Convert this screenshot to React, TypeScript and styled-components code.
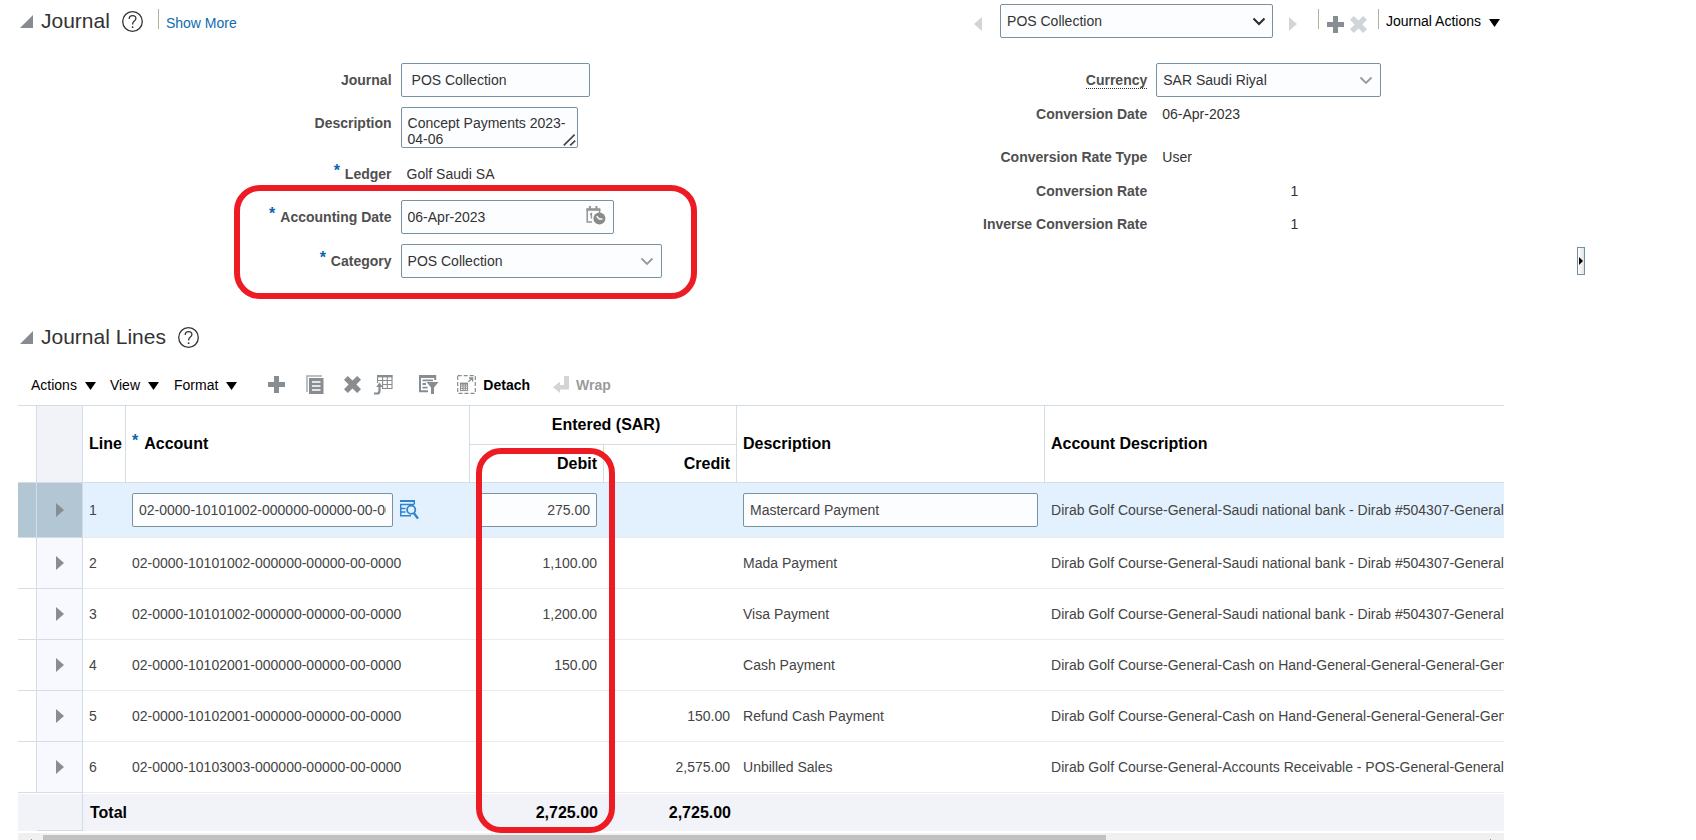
import React from "react";
import styled, { createGlobalStyle, css } from "styled-components";

const color = {
  text: "#333333",
  label: "#4f4f4f",
  link: "#0f6cad",
  required: "#0a66b0",
  fieldBorder: "#7c91a0",
  line: "#d3dde6",
  rowLine: "#ebebeb",
  icon: "#878d91",
  iconOff: "#d2d5d7",
  mark: "#ed1c24",
};

const GlobalStyle = createGlobalStyle`
  *, *::before, *::after { box-sizing: border-box; }
  body {
    margin: 0;
    background: #ffffff;
    color: ${color.text};
    font: 14px/16px "Liberation Sans", Arial, sans-serif;
  }
  button, input, select, textarea { font: inherit; color: inherit; }
`;

const Page = styled.div`
  display: flex;
  height: 100vh;
  overflow: hidden;
`;

const Main = styled.main`
  flex: 1;
  min-width: 0;
  padding-left: 18px;
`;

const SidePanel = styled.aside`
  flex: none;
  width: 192px;
  padding: 247px 0 0 73px;
`;

const SplitterHandle = styled.button`
  display: flex;
  align-items: center;
  justify-content: center;
  width: 8px;
  height: 28px;
  padding: 0;
  border: 1px solid #7290a8;
  background: linear-gradient(90deg, #ffffff, #e4e4e4);
`;

const SectionHeader = styled.header`
  display: flex;
  align-items: center;
  height: 42px;
`;

const Disclosure = styled.button`
  display: flex;
  width: 23px;
  padding: 0 0 0 2px;
  border: 0;
  background: none;
`;

const Title = styled.h2`
  margin: 0;
  font-size: 21px;
  font-weight: 400;
  line-height: 24px;
`;

const HelpButton = styled.button`
  display: flex;
  margin-left: 12px;
  padding: 0;
  border: 0;
  background: none;
`;

const Divider = styled.span`
  width: 1px;
  height: 20px;
  margin-bottom: 5px;
  background: #b3b39a;
`;

const TitleTools = styled.div`
  display: flex;
  align-items: center;
  gap: 7px;
  margin-left: 15px;
`;

const TextLink = styled.a`
  padding-top: 4px;
  color: ${color.link};
  text-decoration: none;
`;

const Navigator = styled.div`
  display: flex;
  align-items: center;
  margin-left: auto;
  padding-right: 4px;
`;

const IconButton = styled.button<{ $space?: number }>`
  display: flex;
  flex: none;
  margin: 0 0 0 ${(p) => p.$space ?? 0}px;
  padding: 0;
  border: 0;
  background: none;
`;

const NavButton = styled(IconButton)`
  padding-top: 6px;
`;

const NavDivider = styled(Divider)<{ $space: number }>`
  margin-left: ${(p) => p.$space}px;
`;

const IconGap = styled.span`
  width: 18px;
`;

const MenuButton = styled.button<{ $space?: number }>`
  display: flex;
  align-items: center;
  gap: 8px;
  margin-left: ${(p) => p.$space ?? 0}px;
  padding: 0;
  border: 0;
  background: none;
  color: #000000;
  svg { margin-top: 3px; }
`;

const fieldBox = css`
  display: block;
  width: 100%;
  height: 34px;
  border: 1px solid ${color.fieldBorder};
  border-radius: 2px;
  background: #fcfdff;
  outline: none;
`;

const FieldWrap = styled.div<{ $width: number }>`
  position: relative;
  width: ${(p) => p.$width}px;
`;

const TextInput = styled.input<{ $pad?: number; $right?: boolean }>`
  ${fieldBox}
  padding: 0 ${(p) => p.$pad ?? 6}px;
  text-align: ${(p) => (p.$right ? "right" : "left")};
`;

const TextArea = styled.textarea`
  ${fieldBox}
  height: 41px;
  padding: 7px 4px 0 6px;
  overflow: hidden;
  resize: none;
`;

const SelectBox = styled.select`
  ${fieldBox}
  padding: 0 28px 0 6px;
  appearance: none;
`;

const Adornment = styled.span<{ $right: number; $bottom?: number }>`
  position: absolute;
  right: ${(p) => p.$right}px;
  ${(p) =>
    p.$bottom === undefined
      ? "top: 0; bottom: 0;"
      : `bottom: ${p.$bottom}px;`}
  display: flex;
  align-items: center;
  pointer-events: none;
`;

const Form = styled.form`
  display: grid;
  grid-template-columns: 849fr 637fr;
  margin-top: 21px;
`;

const FieldColumn = styled.div<{ $gap: number }>`
  display: flex;
  flex-direction: column;
  gap: ${(p) => p.$gap}px;
`;

const FieldRow = styled.div<{ $height?: number; $top?: boolean; $spaced?: boolean }>`
  display: grid;
  grid-template-columns: 44% 1fr;
  align-items: ${(p) => (p.$top ? "start" : "center")};
  min-height: ${(p) => p.$height ?? 34}px;
  margin-top: ${(p) => (p.$spaced ? 9 : 0)}px;
  column-gap: 9px;
`;

const Label = styled.label<{ $top?: boolean }>`
  display: flex;
  justify-content: flex-end;
  gap: 5px;
  padding-top: ${(p) => (p.$top ? 8 : 0)}px;
  color: ${color.label};
  font-weight: 700;
  text-align: right;
`;

const Star = styled.span`
  margin-top: -3px;
  color: ${color.required};
  font-size: 16px;
  font-weight: 700;
`;

const Dotted = styled.span`
  border-bottom: 1px dotted #333333;
`;

const Value = styled.output<{ $number?: boolean }>`
  padding-left: 6px;
  ${(p) => p.$number && "width: 142px; text-align: right;"}
`;

const HighlightedRows = styled(FieldColumn)`
  position: relative;
`;

const FormMark = styled.div`
  position: absolute;
  top: -15px;
  bottom: -21px;
  left: calc(44% - 158px);
  width: 463px;
  border: 6px solid ${color.mark};
  border-radius: 26px;
  pointer-events: none;
`;

const LinesHeader = styled(SectionHeader)`
  margin-top: 38px;
`;

const Toolbar = styled.div`
  display: flex;
  align-items: center;
  height: 47px;
  padding: 6px 0 0 13px;
`;

const LabeledTool = styled.button<{ $space: number }>`
  display: flex;
  align-items: center;
  gap: 7px;
  margin-left: ${(p) => p.$space}px;
  padding: 0;
  border: 0;
  background: none;
  color: #000000;
  font-weight: 700;
  &:disabled { color: #9b9b9b; }
`;

const TableArea = styled.section`
  position: relative;
`;

const TableClip = styled.div`
  overflow: hidden;
  border-top: 1px solid ${color.line};
`;

const Table = styled.table`
  width: 100%;
  table-layout: fixed;
  border-collapse: separate;
  border-spacing: 0;
`;

const Col = styled.col<{ $width?: number }>`
  ${(p) => p.$width && `width: ${p.$width}px;`}
`;

const HeadCell = styled.th<{ $align?: string; $shade?: boolean; $last?: boolean; $height?: number }>`
  height: ${(p) => p.$height ?? 39}px;
  padding: 0 ${(p) => (p.$align === "right" ? 6 : 0)}px 0 6px;
  border-bottom: 1px solid ${color.line};
  border-right: ${(p) => (p.$last ? 0 : 1)}px solid ${color.line};
  background: ${(p) => (p.$shade ? "#f2f3f8" : "#ffffff")};
  color: #000000;
  font-size: 16px;
  line-height: 18px;
  text-align: ${(p) => p.$align ?? "left"};
  white-space: nowrap;
`;

const HeadStar = styled(Star)`
  display: inline-block;
  margin-right: 6px;
  line-height: 16px;
  vertical-align: 3px;
`;

const Row = styled.tr<{ $active: boolean }>`
  height: ${(p) => (p.$active ? 55 : 51)}px;
  background: ${(p) => (p.$active ? "#e3f1ff" : "#ffffff")};
`;

const Cell = styled.td<{ $align?: string }>`
  padding: 0 7px 0 6px;
  border-bottom: 1px solid ${color.rowLine};
  color: #444444;
  text-align: ${(p) => p.$align ?? "left"};
  white-space: nowrap;
`;

const ClippedCell = styled(Cell)`
  padding-right: 0;
  overflow: hidden;
`;

const GutterCell = styled.td<{ $shade?: boolean; $active: boolean }>`
  padding: 0;
  border-right: 1px solid ${color.line};
  border-bottom: 1px solid ${color.line};
  background: ${(p) => (p.$active ? "#b3c6d4" : p.$shade ? "#f8f9fe" : "#ffffff")};
`;

const ExpandButton = styled.button`
  display: flex;
  margin: 0 auto;
  padding: 0;
  border: 0;
  background: none;
`;

const AccountEditor = styled.div`
  display: flex;
  align-items: center;
  gap: 7px;
`;

const TotalCell = styled.td<{ $align?: string; $edge?: boolean }>`
  height: 38px;
  padding: 0 6px 0 7px;
  border-top: 1px solid #ffffff;
  ${(p) =>
    p.$edge &&
    `border-right: 1px solid ${color.line}; border-bottom: 1px solid ${color.line};`}
  background: #f2f3f8;
  color: #000000;
  font-size: 16px;
  line-height: 18px;
  font-weight: 700;
  text-align: ${(p) => p.$align ?? "left"};
`;

const DebitMark = styled.div`
  position: absolute;
  top: 43px;
  bottom: -2px;
  left: 458px;
  width: 139px;
  border: 6px solid ${color.mark};
  border-radius: 25px;
  pointer-events: none;
`;

const ScrollTrack = styled.div`
  display: grid;
  grid-template-columns: 25px 1fr 25px;
  align-items: center;
  justify-items: center;
  height: 17px;
  margin-top: 2px;
  background: #f0f0f0;
`;

const ScrollLane = styled.div`
  width: 100%;
  height: 13px;
`;

const ScrollThumb = styled.div`
  width: 74%;
  height: 13px;
  background: #c1c1c1;
`;

const Corner = () => (
  <svg width="13" height="13" viewBox="0 0 13 13" aria-hidden="true">
    <path d="M13 0V13H0Z" fill="#878b8f" />
  </svg>
);

const Help = () => (
  <svg width="21" height="21" viewBox="0 0 21 21" fill="none" stroke="#333" aria-hidden="true">
    <circle cx="10.5" cy="10.5" r="9.8" strokeWidth="1.3" />
    <path d="M7.2 8C7.2 5.9 8.6 4.6 10.6 4.6S13.9 5.8 13.9 7.6C13.9 10 10.6 10.2 10.6 12.9V13.6" strokeWidth="1.3" />
    <circle cx="10.6" cy="16.2" r="0.9" fill="#333" stroke="none" />
  </svg>
);

const Side = ({ left = false, fill = color.icon, w = 8, h = 14 }) => (
  <svg width={w} height={h} viewBox="0 0 8 14" preserveAspectRatio="none" aria-hidden="true">
    <path d={left ? "M8 0V14L0 7Z" : "M0 0V14L8 7Z"} fill={fill} />
  </svg>
);

const Down = () => (
  <svg width="11" height="8" viewBox="0 0 11 8" aria-hidden="true">
    <path d="M0 0H11L5.5 8Z" fill="#000" />
  </svg>
);

const Plus = () => (
  <svg width="17" height="17" viewBox="0 0 17 17" aria-hidden="true">
    <path d="M6 0H11V6H17V11H11V17H6V11H0V6H6Z" fill={color.icon} />
  </svg>
);

const Cross = ({ fill = color.icon }) => (
  <svg width="17" height="17" viewBox="0 0 17 17" aria-hidden="true">
    <path d="M3.8 0L8.5 4.6 13.2 0 17 3.8 12.4 8.5 17 13.2 13.2 17 8.5 12.4 3.8 17 0 13.2 4.6 8.5 0 3.8Z" fill={fill} />
  </svg>
);

const Chevron = ({ dark = false }) => (
  <svg width="14" height="9" viewBox="0 0 14 9" fill="none" aria-hidden="true">
    <path
      d="M1.5 1.5L7 7L12.5 1.5"
      stroke={dark ? "#2b2b2b" : "#9a9a9a"}
      strokeWidth={dark ? 2 : 1.8}
    />
  </svg>
);

const ResizeGrip = () => (
  <svg width="13" height="12" viewBox="0 0 13 12" stroke="#444" strokeWidth="1.6" aria-hidden="true">
    <path d="M0.8 11.4L11.6 0.6M7.2 11.4L12.2 6.6" fill="none" />
  </svg>
);

const CalendarClock = () => (
  <svg width="20" height="22" viewBox="0 0 20 22" aria-hidden="true">
    <path d="M6 16H1.2V3.2H13.6V7" fill="none" stroke="#949494" strokeWidth="1.5" />
    <path d="M0.5 2.4H14.3V4.8H0.5Z" fill="#949494" />
    <path d="M3.9 0V3M10.4 0V3" stroke="#949494" strokeWidth="2" />
    <path d="M4 8.6L5.4 7.6V12.4" fill="none" stroke="#949494" strokeWidth="1.4" />
    <circle cx="13.4" cy="12.4" r="6" fill="#8a8a8a" />
    <path d="M10.6 10.2L13.2 13H16.4" fill="none" stroke="#fff" strokeWidth="1.4" />
  </svg>
);

const Duplicate = () => (
  <svg width="18" height="19" viewBox="0 0 18 19" fill="none" aria-hidden="true">
    <path d="M1 17V1H16" stroke="#a8acaf" strokeWidth="1.5" />
    <path d="M3 3H17.5V19H3Z" fill={color.icon} />
    <path d="M6 7H14.5M6 11H14.5M6 15H14.5" stroke="#fff" strokeWidth="1.4" />
  </svg>
);

const MoveGrid = () => (
  <svg width="19" height="20" viewBox="0 0 19 20" fill="none" stroke={color.icon} aria-hidden="true">
    <path d="M3 1.2H18.4" strokeWidth="2.4" />
    <path d="M3.6 0V8M8.6 0V14M13.3 0V14M18 0V14M3 5.5H18.5M8 9.5H18.5M8 13.5H18.5" strokeWidth="1.1" />
    <path d="M0 18.5H3C5 18.5 5.5 17.5 5.5 15.5V11" strokeWidth="2.2" />
    <path d="M2.2 12L5.5 7.6L8.8 12Z" fill={color.icon} stroke="none" />
  </svg>
);

const TableFilter = () => (
  <svg width="20" height="19" viewBox="0 0 20 19" fill="none" stroke={color.icon} aria-hidden="true">
    <path d="M0 1.5H17" strokeWidth="3" />
    <path d="M1 0V17M16.2 0V5M0 16.2H9" strokeWidth="2" />
    <path d="M3.5 5.4H14M3.5 9H7M3.5 12.6H8.5" strokeWidth="1.8" />
    <path d="M7.5 7H19.5L15 12.5V19H12V12.5Z" fill={color.icon} stroke="none" />
  </svg>
);

const DetachIcon = () => (
  <svg width="19" height="19" viewBox="0 0 19 19" fill="none" stroke={color.icon} aria-hidden="true">
    <rect x="0.7" y="0.7" width="17.6" height="17.6" strokeWidth="1.2" strokeDasharray="4 2" />
    <path d="M3 8.6H11" strokeWidth="2" />
    <path d="M3.5 8V16M6 8V16M8.3 8V16M10.6 8V16M3 11H11M3 13.3H11M3 15.6H11" strokeWidth="1" />
    <path d="M11.5 6.7L15 3.2M12 3H15.6V6.6" strokeWidth="1.3" />
  </svg>
);

const WrapIcon = () => (
  <svg width="16" height="17" viewBox="0 0 16 17" aria-hidden="true">
    <path d="M11 0H16V13.5H7V17L0 11.2L7 5.5V9H11Z" fill={color.iconOff} />
  </svg>
);

const AccountSearch = () => (
  <svg width="19" height="20" viewBox="0 0 19 20" fill="none" stroke="#2f84d0" aria-hidden="true">
    <path d="M0 1H15" strokeWidth="2" />
    <path d="M14.3 0V4.5M0 4.6H14M0.7 4V16M0 8.4H5.5M0 12H5.5M0 15.8H11" strokeWidth="1.5" />
    <circle cx="11.2" cy="9.8" r="4.1" strokeWidth="1.8" />
    <path d="M13.8 13L18 18.6" strokeWidth="2.4" />
  </svg>
);

type JournalLine = {
  account: string;
  debit?: string;
  credit?: string;
  description: string;
  accountDescription: string;
};

const bank =
  "Dirab Golf Course-General-Saudi national bank - Dirab #504307-General-General-General";
const cash =
  "Dirab Golf Course-General-Cash on Hand-General-General-General-General-General";

const lines: JournalLine[] = [
  { account: "02-0000-10101002-000000-00000-00-0000", debit: "275.00", description: "Mastercard Payment", accountDescription: bank },
  { account: "02-0000-10101002-000000-00000-00-0000", debit: "1,100.00", description: "Mada Payment", accountDescription: bank },
  { account: "02-0000-10101002-000000-00000-00-0000", debit: "1,200.00", description: "Visa Payment", accountDescription: bank },
  { account: "02-0000-10102001-000000-00000-00-0000", debit: "150.00", description: "Cash Payment", accountDescription: cash },
  { account: "02-0000-10102001-000000-00000-00-0000", credit: "150.00", description: "Refund Cash Payment", accountDescription: cash },
  {
    account: "02-0000-10103003-000000-00000-00-0000",
    credit: "2,575.00",
    description: "Unbilled Sales",
    accountDescription: "Dirab Golf Course-General-Accounts Receivable - POS-General-General-General",
  },
];

const JournalHeader = () => (
  <SectionHeader>
    <Disclosure aria-label="Collapse Journal"><Corner /></Disclosure>
    <Title>Journal</Title>
    <HelpButton aria-label="Help"><Help /></HelpButton>
    <TitleTools>
      <Divider />
      <TextLink href="#more">Show More</TextLink>
    </TitleTools>
    <Navigator>
      <NavButton aria-label="Previous journal"><Side left fill={color.iconOff} /></NavButton>
      <IconGap />
      <FieldWrap $width={273}>
        <SelectBox aria-label="Journal list" defaultValue="POS Collection">
          <option>POS Collection</option>
        </SelectBox>
        <Adornment $right={7}><Chevron dark /></Adornment>
      </FieldWrap>
      <NavButton $space={16} aria-label="Next journal"><Side fill={color.iconOff} /></NavButton>
      <NavDivider $space={21} />
      <NavButton $space={8} aria-label="Create journal"><Plus /></NavButton>
      <NavButton $space={6} aria-label="Delete journal"><Cross fill={color.iconOff} /></NavButton>
      <NavDivider $space={11} />
      <MenuButton $space={7}>Journal Actions <Down /></MenuButton>
    </Navigator>
  </SectionHeader>
);

const JournalForm = () => (
  <Form>
    <FieldColumn $gap={10}>
      <FieldRow>
        <Label htmlFor="journal">Journal</Label>
        <FieldWrap $width={189}><TextInput id="journal" $pad={10} defaultValue="POS Collection" /></FieldWrap>
      </FieldRow>
      <FieldRow $height={41} $top>
        <Label htmlFor="description" $top>Description</Label>
        <FieldWrap $width={177}>
          <TextArea id="description" defaultValue="Concept Payments 2023-04-06" />
          <Adornment $right={2} $bottom={2}><ResizeGrip /></Adornment>
        </FieldWrap>
      </FieldRow>
      <FieldRow $height={32}>
        <Label htmlFor="ledger"><Star>*</Star>Ledger</Label>
        <Value id="ledger">Golf Saudi SA</Value>
      </FieldRow>
      <HighlightedRows $gap={10}>
        <FieldRow>
          <Label htmlFor="date"><Star>*</Star>Accounting Date</Label>
          <FieldWrap $width={213}>
            <TextInput id="date" defaultValue="06-Apr-2023" />
            <Adornment $right={8}><CalendarClock /></Adornment>
          </FieldWrap>
        </FieldRow>
        <FieldRow>
          <Label htmlFor="category"><Star>*</Star>Category</Label>
          <FieldWrap $width={261}>
            <SelectBox id="category" defaultValue="POS Collection">
              <option>POS Collection</option>
            </SelectBox>
            <Adornment $right={8}><Chevron /></Adornment>
          </FieldWrap>
        </FieldRow>
        <FormMark />
      </HighlightedRows>
    </FieldColumn>
    <FieldColumn $gap={0}>
      <FieldRow>
        <Label htmlFor="currency"><Dotted>Currency</Dotted></Label>
        <FieldWrap $width={225}>
          <SelectBox id="currency" defaultValue="SAR Saudi Riyal">
            <option>SAR Saudi Riyal</option>
          </SelectBox>
          <Adornment $right={8}><Chevron /></Adornment>
        </FieldWrap>
      </FieldRow>
      <FieldRow>
        <Label htmlFor="cdate">Conversion Date</Label>
        <Value id="cdate">06-Apr-2023</Value>
      </FieldRow>
      <FieldRow $spaced>
        <Label htmlFor="rtype">Conversion Rate Type</Label>
        <Value id="rtype">User</Value>
      </FieldRow>
      <FieldRow $height={33}>
        <Label htmlFor="rate">Conversion Rate</Label>
        <Value id="rate" $number>1</Value>
      </FieldRow>
      <FieldRow>
        <Label htmlFor="irate">Inverse Conversion Rate</Label>
        <Value id="irate" $number>1</Value>
      </FieldRow>
    </FieldColumn>
  </Form>
);

const LinesToolbar = () => (
  <Toolbar>
    <MenuButton>Actions <Down /></MenuButton>
    <MenuButton $space={14}>View <Down /></MenuButton>
    <MenuButton $space={15}>Format <Down /></MenuButton>
    <IconButton $space={31} aria-label="Add row"><Plus /></IconButton>
    <IconButton $space={21} aria-label="Duplicate"><Duplicate /></IconButton>
    <IconButton $space={20} aria-label="Delete"><Cross /></IconButton>
    <IconButton $space={13} aria-label="Export"><MoveGrid /></IconButton>
    <IconButton $space={26} aria-label="Query by example"><TableFilter /></IconButton>
    <LabeledTool $space={18}><DetachIcon />Detach</LabeledTool>
    <LabeledTool $space={23} disabled><WrapIcon />Wrap</LabeledTool>
  </Toolbar>
);

const LineRow = ({ line, index }: { line: JournalLine; index: number }) => {
  const active = index === 0;
  return (
    <Row $active={active}>
      <GutterCell $active={active} />
      <GutterCell $active={active} $shade>
        <ExpandButton aria-label={`Expand line ${index + 1}`}><Side /></ExpandButton>
      </GutterCell>
      <Cell>{index + 1}</Cell>
      <Cell>
        {active ? (
          <AccountEditor>
            <FieldWrap $width={261}><TextInput aria-label="Account" defaultValue={line.account} /></FieldWrap>
            <IconButton aria-label="Search account"><AccountSearch /></IconButton>
          </AccountEditor>
        ) : line.account}
      </Cell>
      <Cell $align="right">
        {active ? <TextInput aria-label="Debit" $right defaultValue={line.debit} /> : line.debit}
      </Cell>
      <Cell $align="right">{line.credit}</Cell>
      <Cell>
        {active ? <TextInput aria-label="Description" defaultValue={line.description} /> : line.description}
      </Cell>
      <ClippedCell>{line.accountDescription}</ClippedCell>
    </Row>
  );
};

const JournalLines = () => (
  <TableArea>
    <TableClip>
      <Table>
        <colgroup>
          <Col $width={19} />
          <Col $width={46} />
          <Col $width={43} />
          <Col $width={344} />
          <Col $width={134} />
          <Col $width={133} />
          <Col $width={308} />
          <Col />
        </colgroup>
        <thead>
          <tr>
            <HeadCell rowSpan={2} />
            <HeadCell rowSpan={2} $shade />
            <HeadCell rowSpan={2}>Line</HeadCell>
            <HeadCell rowSpan={2}><HeadStar>*</HeadStar>Account</HeadCell>
            <HeadCell colSpan={2} $align="center">Entered (SAR)</HeadCell>
            <HeadCell rowSpan={2}>Description</HeadCell>
            <HeadCell rowSpan={2} $last>Account Description</HeadCell>
          </tr>
          <tr>
            <HeadCell $align="right" $height={38}>Debit</HeadCell>
            <HeadCell $align="right" $height={38}>Credit</HeadCell>
          </tr>
        </thead>
        <tbody>
          {lines.map((line, i) => <LineRow key={i} line={line} index={i} />)}
        </tbody>
        <tfoot>
          <tr>
            <TotalCell />
            <TotalCell $edge />
            <TotalCell colSpan={2}>Total</TotalCell>
            <TotalCell $align="right">2,725.00</TotalCell>
            <TotalCell $align="right">2,725.00</TotalCell>
            <TotalCell colSpan={2} />
          </tr>
        </tfoot>
      </Table>
    </TableClip>
    <DebitMark />
  </TableArea>
);

export default function App() {
  return (
    <>
      <GlobalStyle />
      <Page>
        <Main>
          <JournalHeader />
          <JournalForm />
          <LinesHeader>
            <Disclosure aria-label="Collapse Journal Lines"><Corner /></Disclosure>
            <Title>Journal Lines</Title>
            <HelpButton aria-label="Help"><Help /></HelpButton>
          </LinesHeader>
          <LinesToolbar />
          <JournalLines />
          <ScrollTrack>
            <Side left fill="#505050" w={3} h={5} />
            <ScrollLane><ScrollThumb /></ScrollLane>
            <Side fill="#505050" w={3} h={5} />
          </ScrollTrack>
        </Main>
        <SidePanel>
          <SplitterHandle aria-label="Show side panel"><Side fill="#000" w={4} h={8} /></SplitterHandle>
        </SidePanel>
      </Page>
    </>
  );
}
